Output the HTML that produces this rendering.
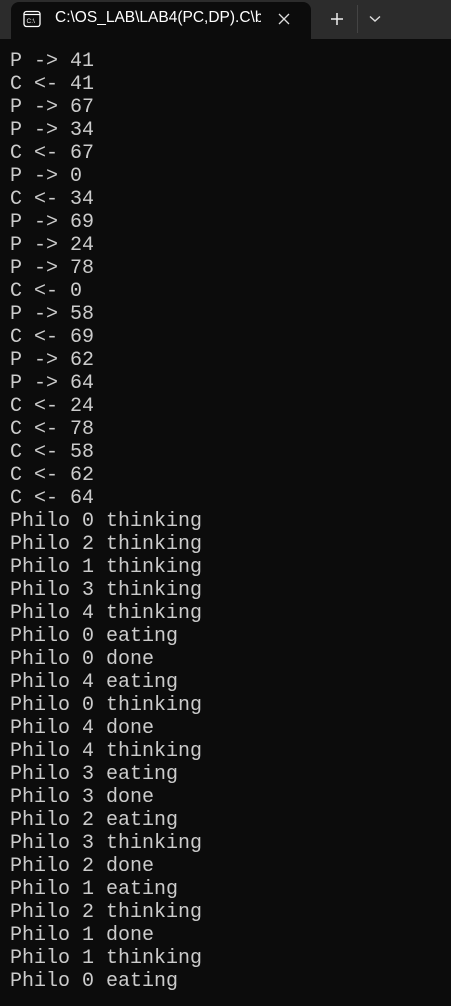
<!DOCTYPE html>
<html><head><meta charset="utf-8"><style>
html,body{margin:0;padding:0;width:451px;height:1006px;background:#0c0c0c;overflow:hidden}
.bar{position:absolute;left:0;top:0;width:451px;height:39px;background:#2c2c2c}
.tab{position:absolute;left:11px;top:2px;width:300px;height:37px;background:#0c0c0c;border-radius:8px 8px 0 0}
.title{position:absolute;left:55px;top:9px;color:#fff;font:15.5px "Liberation Sans",sans-serif;white-space:nowrap;width:206px;overflow:hidden}
.term{position:absolute;left:10px;top:50px;color:#cccccc;font:20px/23px "Liberation Mono",monospace;white-space:pre;margin:0}
</style></head><body>
<div class="bar"></div>
<div class="tab"></div>
<svg style="position:absolute;left:23px;top:10px" width="18" height="18" viewBox="0 0 18 18"><rect x="1" y="1.5" width="16" height="15" rx="2.5" fill="none" stroke="#fff" stroke-width="1.3"/><line x1="1" y1="4.5" x2="17" y2="4.5" stroke="#fff" stroke-width="1.2"/><text x="3.5" y="13" font-size="6.5" fill="#fff" font-family="Liberation Sans">C:\</text></svg>
<div class="title">C:\OS_LAB\LAB4(PC,DP).C\bin</div>
<svg style="position:absolute;left:278px;top:13px" width="12" height="12"><path d="M1 1L11 11M11 1L1 11" stroke="#ddd" stroke-width="1.3"/></svg>
<svg style="position:absolute;left:330px;top:12px" width="14" height="14"><path d="M7 1V13M1 7H13" stroke="#eee" stroke-width="1.5"/></svg>
<div style="position:absolute;left:357px;top:5px;width:1px;height:28px;background:#444"></div>
<svg style="position:absolute;left:369px;top:15px" width="12" height="8"><path d="M1 1.5L6 6L11 1.5" stroke="#ddd" stroke-width="1.4" fill="none"/></svg>
<pre class="term">P -&gt; 41
C &lt;- 41
P -&gt; 67
P -&gt; 34
C &lt;- 67
P -&gt; 0
C &lt;- 34
P -&gt; 69
P -&gt; 24
P -&gt; 78
C &lt;- 0
P -&gt; 58
C &lt;- 69
P -&gt; 62
P -&gt; 64
C &lt;- 24
C &lt;- 78
C &lt;- 58
C &lt;- 62
C &lt;- 64
Philo 0 thinking
Philo 2 thinking
Philo 1 thinking
Philo 3 thinking
Philo 4 thinking
Philo 0 eating
Philo 0 done
Philo 4 eating
Philo 0 thinking
Philo 4 done
Philo 4 thinking
Philo 3 eating
Philo 3 done
Philo 2 eating
Philo 3 thinking
Philo 2 done
Philo 1 eating
Philo 2 thinking
Philo 1 done
Philo 1 thinking
Philo 0 eating</pre>
</body></html>
